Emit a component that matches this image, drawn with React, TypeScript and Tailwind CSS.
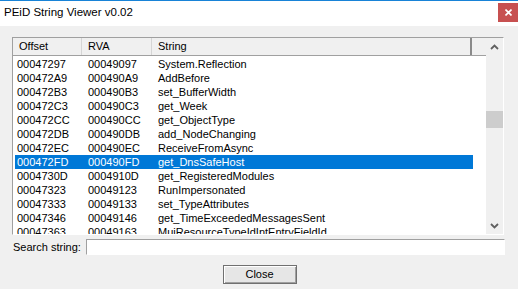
const rows = [
  ["00047297", "00049097", "System.Reflection"],
  ["000472A9", "000490A9", "AddBefore"],
  ["000472B3", "000490B3", "set_BufferWidth"],
  ["000472C3", "000490C3", "get_Week"],
  ["000472CC", "000490CC", "get_ObjectType"],
  ["000472DB", "000490DB", "add_NodeChanging"],
  ["000472EC", "000490EC", "ReceiveFromAsync"],
  ["000472FD", "000490FD", "get_DnsSafeHost"],
  ["0004730D", "0004910D", "get_RegisteredModules"],
  ["00047323", "00049123", "RunImpersonated"],
  ["00047333", "00049133", "set_TypeAttributes"],
  ["00047346", "00049146", "get_TimeExceededMessagesSent"],
  ["00047363", "00049163", "MuiResourceTypeIdIntEntryFieldId"],
];

const selected = 7;

function Chevron({ up }: { up?: boolean }) {
  return (
    <svg width="9" height="6" viewBox="0 0 9 6">
      <path
        d={up ? "M1 5 L4.5 1.5 L8 5" : "M1 1 L4.5 4.5 L8 1"}
        fill="none"
        stroke="#606060"
        strokeWidth="1.8"
      />
    </svg>
  );
}

export default function App() {
  return (
    <div
      className="flex h-[289px] w-[518px] flex-col overflow-hidden bg-[#f0f0f0] text-[11px] text-black"
      style={{ fontFamily: '"Liberation Sans", Arial, sans-serif' }}
    >
      {/* title bar */}
      <div className="flex h-[26px] shrink-0 items-start border-t border-[#1883d7] bg-white">
        <div className="flex-1 pl-[4px] pt-[4px] text-[11.5px] leading-[14px] text-black">
          PEiD String Viewer v0.02
        </div>
        <div className="mt-[2px] flex h-[19px] w-[20px] items-center justify-center bg-[#c75050]">
          <svg width="7" height="7" viewBox="0 0 7 7">
            <path d="M0.5 0.5 L6.5 6.5 M6.5 0.5 L0.5 6.5" stroke="white" strokeWidth="1.6" />
          </svg>
        </div>
      </div>

      <div className="flex flex-1 flex-col pl-[12px] pr-[13px] pt-[11px]">
        {/* list view */}
        <div className="flex h-[198px] w-[492px] border border-b-white border-l-[#a0a0a0] border-r-white border-t-[#a0a0a0] bg-white">
          <div className="flex w-[474px] flex-col overflow-hidden">
            <div className="flex h-[18px] shrink-0 border-b border-[#a0a0a0] bg-[#f0f0f0] leading-[17px]">
              <div className="w-[69px] border-r border-[#d5d5d5] pl-[6px]">Offset</div>
              <div className="w-[70px] border-r border-[#d5d5d5] pl-[6px]">RVA</div>
              <div className="w-[320px] border-r-2 border-[#8a8a8a] pl-[6px]">String</div>
              <div className="flex-1" />
            </div>
            <div className="flex flex-col pl-[2px] pt-[1px]">
              {rows.map((r, i) => (
                <div
                  key={r[0]}
                  className={
                    "flex h-[14px] w-[458px] shrink-0 leading-[14px] " +
                    (i === selected ? "bg-[#0078d7] text-white" : "")
                  }
                >
                  <div className="w-[67px] pl-[2px]">{r[0]}</div>
                  <div className="w-[70px] pl-[6px]">{r[1]}</div>
                  <div className="flex-1 whitespace-nowrap pl-[6px]">{r[2]}</div>
                </div>
              ))}
            </div>
          </div>
          {/* scrollbar */}
          <div className="flex w-[17px] flex-col bg-[#f0f0f0]">
            <div className="flex h-[17px] items-center justify-center">
              <Chevron up />
            </div>
            <div className="h-[56px]" />
            <div className="h-[17px] bg-[#cdcdcd]" />
            <div className="flex-1" />
            <div className="flex h-[17px] items-center justify-center">
              <Chevron />
            </div>
          </div>
        </div>

        {/* search */}
        <div className="mt-[4px] flex h-[16px] items-center">
          <div className="w-[74px] pl-[1px]">Search string:</div>
          <div className="h-[16px] w-[419px] border border-b-white border-l-[#a0a0a0] border-r-white border-t-[#a0a0a0] bg-white" />
        </div>

        {/* button */}
        <div className="mt-[10px] flex justify-center pl-[2px]">
          <div className="flex h-[19px] w-[74px] items-center justify-center border border-[#707070] bg-[#e6e6e6] shadow-[inset_1px_1px_0_#ffffff,inset_-1px_-1px_0_#a0a0a0]">
            Close
          </div>
        </div>
      </div>
    </div>
  );
}
